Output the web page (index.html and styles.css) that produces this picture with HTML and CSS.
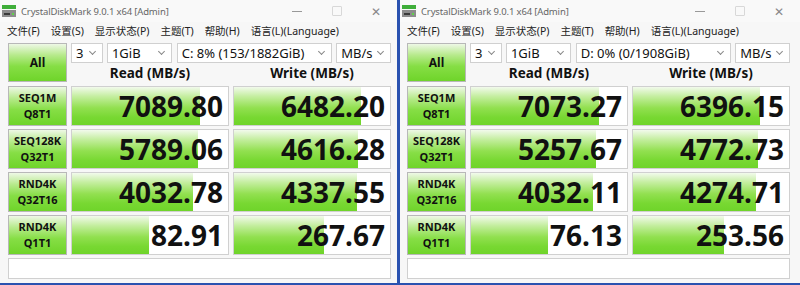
FILE: index.html
```html
<!DOCTYPE html>
<html lang="zh-CN">
<head>
    <meta charset="UTF-8">
    <title>CrystalDiskMark</title>
    <link rel="stylesheet" href="styles.css">
</head>
<body>
    <div class="window win-left">
        <div class="titlebar">
            <svg class="app-icon" width="14" height="14" viewBox="0 0 14 14">
                <rect x="0" y="1" width="14" height="4" fill="#3fae3a"/>
                <rect x="0" y="6" width="14" height="7" fill="#8c8c8c"/>
                <rect x="2" y="9" width="6" height="2" fill="#3a3a3a"/>
                <rect x="10" y="9" width="2" height="2" fill="#5fd34a"/>
            </svg>
            <span class="title">CrystalDiskMark 9.0.1 x64 [Admin]</span>
            <div class="controls">
                <span class="ctl min"></span>
                <span class="ctl max"></span>
                <span class="ctl close">✕</span>
            </div>
        </div>
        <div class="menu">
            <span>文件(F)</span><span>设置(S)</span><span>显示状态(P)</span><span>主题(T)</span><span>帮助(H)</span><span>语言(L)(Language)</span>
        </div>
        <div class="bench">
            <div class="top">
                <div class="label all">All</div>
                <div class="top-right">
                    <div class="selects">
                        <div class="sel s-count">3<i></i></div>
                        <div class="sel s-size">1GiB<i></i></div>
                        <div class="sel s-drive">C: 8% (153/1882GiB)<i></i></div>
                        <div class="sel s-unit">MB/s<i></i></div>
                    </div>
                    <div class="heads">
                        <div>Read (MB/s)</div>
                        <div>Write (MB/s)</div>
                    </div>
                </div>
            </div>
            <div class="row">
                <div class="label">SEQ1M<br>Q8T1</div>
                <div class="cell"><div class="bar" style="width:128px"></div><span>7089.80</span></div>
                <div class="cell"><div class="bar" style="width:127px"></div><span>6482.20</span></div>
            </div>
            <div class="row">
                <div class="label">SEQ128K<br>Q32T1</div>
                <div class="cell"><div class="bar" style="width:126px"></div><span>5789.06</span></div>
                <div class="cell"><div class="bar" style="width:124px"></div><span>4616.28</span></div>
            </div>
            <div class="row">
                <div class="label">RND4K<br>Q32T16</div>
                <div class="cell"><div class="bar" style="width:121px"></div><span>4032.78</span></div>
                <div class="cell"><div class="bar" style="width:123px"></div><span>4337.55</span></div>
            </div>
            <div class="row">
                <div class="label">RND4K<br>Q1T1</div>
                <div class="cell"><div class="bar" style="width:77px"></div><span>82.91</span></div>
                <div class="cell"><div class="bar" style="width:90px"></div><span>267.67</span></div>
            </div>
            <div class="comment"></div>
        </div>
    </div>

    <div class="window win-right">
        <div class="titlebar">
            <svg class="app-icon" width="14" height="14" viewBox="0 0 14 14">
                <rect x="0" y="1" width="14" height="4" fill="#3fae3a"/>
                <rect x="0" y="6" width="14" height="7" fill="#8c8c8c"/>
                <rect x="2" y="9" width="6" height="2" fill="#3a3a3a"/>
                <rect x="10" y="9" width="2" height="2" fill="#5fd34a"/>
            </svg>
            <span class="title">CrystalDiskMark 9.0.1 x64 [Admin]</span>
            <div class="controls">
                <span class="ctl min"></span>
                <span class="ctl max"></span>
                <span class="ctl close">✕</span>
            </div>
        </div>
        <div class="menu">
            <span>文件(F)</span><span>设置(S)</span><span>显示状态(P)</span><span>主题(T)</span><span>帮助(H)</span><span>语言(L)(Language)</span>
        </div>
        <div class="bench">
            <div class="top">
                <div class="label all">All</div>
                <div class="top-right">
                    <div class="selects">
                        <div class="sel s-count">3<i></i></div>
                        <div class="sel s-size">1GiB<i></i></div>
                        <div class="sel s-drive">D: 0% (0/1908GiB)<i></i></div>
                        <div class="sel s-unit">MB/s<i></i></div>
                    </div>
                    <div class="heads">
                        <div>Read (MB/s)</div>
                        <div>Write (MB/s)</div>
                    </div>
                </div>
            </div>
            <div class="row">
                <div class="label">SEQ1M<br>Q8T1</div>
                <div class="cell"><div class="bar" style="width:128px"></div><span>7073.27</span></div>
                <div class="cell"><div class="bar" style="width:127px"></div><span>6396.15</span></div>
            </div>
            <div class="row">
                <div class="label">SEQ128K<br>Q32T1</div>
                <div class="cell"><div class="bar" style="width:125px"></div><span>5257.67</span></div>
                <div class="cell"><div class="bar" style="width:125px"></div><span>4772.73</span></div>
            </div>
            <div class="row">
                <div class="label">RND4K<br>Q32T16</div>
                <div class="cell"><div class="bar" style="width:122px"></div><span>4032.11</span></div>
                <div class="cell"><div class="bar" style="width:123px"></div><span>4274.71</span></div>
            </div>
            <div class="row">
                <div class="label">RND4K<br>Q1T1</div>
                <div class="cell"><div class="bar" style="width:77px"></div><span>76.13</span></div>
                <div class="cell"><div class="bar" style="width:91px"></div><span>253.56</span></div>
            </div>
            <div class="comment"></div>
        </div>
    </div>
</body>
</html>
```

FILE: styles.css
```css
body {
    margin: 0;
    padding: 0;
    width: 800px;
    height: 285px;
    overflow: hidden;
    background: #2a52b0;
    display: flex;
    gap: 3px;
    font-family: "Noto Sans", "Noto Sans CJK SC", sans-serif;
    color: #111;
}
.window {
    background: #f7f7f7;
    height: 283px;
    box-sizing: border-box;
}
.win-left {
    width: 397px;
}
.win-right {
    width: 400px;
}
.titlebar {
    height: 22px;
    display: flex;
    align-items: center;
    background: #f9f9f9;
}
.app-icon {
    margin-left: 2px;
    margin-right: 5px;
}
.title {
    font-size: 9.5px;
    color: #666;
    letter-spacing: -0.15px;
}
.controls {
    margin-left: auto;
    display: flex;
    align-items: center;
    height: 22px;
}
.ctl {
    width: 40px;
    display: flex;
    justify-content: center;
    align-items: center;
    color: #888;
    font-size: 12px;
}
.ctl.min::before {
    content: "";
    width: 10px;
    border-top: 1px solid #999;
}
.ctl.max::before {
    content: "";
    width: 8px;
    height: 8px;
    border: 1px solid #d8d8d8;
    border-radius: 1px;
}
.ctl.close {
    width: 38px;
    margin-right: 2px;
}
.menu {
    height: 16px;
    display: flex;
    align-items: center;
    padding-left: 7px;
    font-size: 10.5px;
    color: #222;
}
.menu span {
    margin-right: 11px;
}
.bench {
    padding: 5px 6px 0 8px;
}
.win-right .bench {
    padding-left: 7px;
}
.top {
    display: flex;
    gap: 4px;
    height: 39px;
    margin-bottom: 4px;
}
.label {
    width: 59px;
    box-sizing: border-box;
    border: 1px solid #b8b8b8;
    background: linear-gradient(to bottom, #eef8e6 0%, #b7ea8c 30%, #86de45 60%, #6fd42a 100%);
    display: flex;
    align-items: center;
    justify-content: center;
    text-align: center;
    font-size: 11px;
    font-weight: bold;
    line-height: 16px;
    color: #111;
}
.label.all {
    font-size: 12px;
}
.top-right {
    width: 320px;
    display: flex;
    flex-direction: column;
}
.selects {
    display: flex;
    gap: 4px;
    height: 20px;
}
.sel {
    position: relative;
    box-sizing: border-box;
    height: 20px;
    background: #fff;
    border: 1px solid #d0d0d0;
    font-size: 13px;
    line-height: 18px;
    padding-left: 4px;
    color: #111;
}
.sel i {
    position: absolute;
    right: 7px;
    top: 5px;
    width: 4px;
    height: 4px;
    border-right: 1px solid #888;
    border-bottom: 1px solid #888;
    transform: rotate(45deg);
}
.s-count { width: 32px; }
.s-size { width: 65px; }
.s-drive { width: 156px; margin-left: 1px; }
.s-unit { width: 55px; }
.heads {
    display: flex;
    gap: 4px;
    flex: 1;
    align-items: flex-end;
}
.heads div {
    width: 158px;
    text-align: center;
    font-size: 13.5px;
    font-weight: bold;
    line-height: 17px;
}
.row {
    display: flex;
    gap: 4px;
    height: 40px;
    margin-bottom: 3px;
}
.cell {
    position: relative;
    width: 158px;
    box-sizing: border-box;
    background: #fff;
    border: 1px solid #d0d0d0;
    display: flex;
    align-items: center;
    justify-content: flex-end;
    padding-right: 5px;
}
.bar {
    position: absolute;
    left: 0;
    top: 0;
    bottom: 0;
    background: linear-gradient(to bottom, #f2faec 0%, #c4ee9f 25%, #92e050 55%, #78d832 80%, #6fd42a 100%);
}
.cell span {
    position: relative;
    font-size: 28px;
    font-weight: bold;
    line-height: 1;
    color: #111;
}
.comment {
    width: 383px;
    height: 21px;
    box-sizing: border-box;
    background: #fff;
    border: 1px solid #d0d0d0;
}
```
